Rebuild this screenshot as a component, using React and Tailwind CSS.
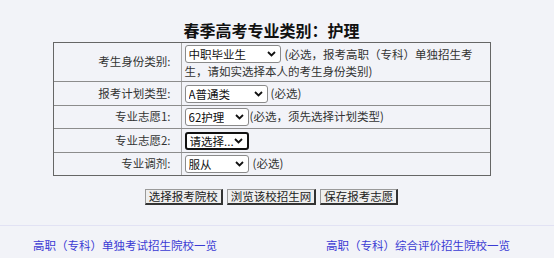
import React from "react";

function Chevron() {
  return (
    <svg width="9" height="6" viewBox="0 0 9 6" className="shrink-0">
      <path d="M1 1 L4.5 4.5 L8 1" fill="none" stroke="#111" strokeWidth="1.8" />
    </svg>
  );
}

function Sel({ w, text, focus }) {
  return (
    <span
      className={
        "inline-flex items-center justify-between h-[18px] bg-white rounded-[3px] pl-[3px] pr-[4px] align-middle text-[#111] whitespace-nowrap overflow-hidden " +
        (focus ? "border-2 border-[#111] pl-[2px] " : "border border-[#8a8a8a] ") +
        w
      }
    >
      <span className="leading-[14px] overflow-hidden">{text}</span>
      <Chevron />
    </span>
  );
}

function Row({ label, children, h, last }) {
  return (
    <div className={"flex " + (last ? "" : "border-b border-[#8c8c8c]")}>
      <div className={"w-[128px] shrink-0 flex items-center justify-end pr-[10px] border-r border-[#a8a8a8] " + h}>
        {label}
      </div>
      <div className="flex-1 pl-[3px] flex items-center whitespace-nowrap">{children}</div>
    </div>
  );
}

export default function App() {
  return (
    <div
      className="w-[554px] h-[258px] bg-[#f2f3f8] overflow-hidden text-[#333] text-[11.5px]"
      style={{ fontFamily: '"Noto Sans CJK SC", "Noto Sans", sans-serif' }}
    >
      <div className="w-[543px]">
        <div className="pt-[21px] h-[42px] text-center text-[16px] leading-[19px] font-bold text-[#111]">
          春季高考专业类别：护理
        </div>
        <div className="mx-auto w-[438px] border border-[#666]">
          <div className="flex border-b border-[#8c8c8c]">
            <div className="w-[128px] shrink-0 flex items-center justify-end pr-[10px] border-r border-[#a8a8a8] h-[38px]">
              考生身份类别:
            </div>
            <div className="flex-1 pl-[3px] pt-[2px] leading-[17px] whitespace-nowrap">
              <div className="flex items-center gap-[4px]">
                <Sel w="w-[96px]" text="中职毕业生" />
                <span>(必选，报考高职（专科）单独招生考</span>
              </div>
              <div>生，请如实选择本人的考生身份类别)</div>
            </div>
          </div>
          <Row label="报考计划类型:" h="h-[23px]">
            <Sel w="w-[83px]" text="A普通类" />
            <span className="ml-[3px]">(必选)</span>
          </Row>
          <Row label="专业志愿1:" h="h-[22px]">
            <Sel w="w-[64px]" text="62护理" />
            <span className="ml-[1px]">(必选，须先选择计划类型)</span>
          </Row>
          <Row label="专业志愿2:" h="h-[23px]">
            <Sel w="w-[64px]" text="请选择..." focus />
          </Row>
          <Row label="专业调剂:" h="h-[22px]" last>
            <Sel w="w-[64px]" text="服从" />
            <span className="ml-[4px]">(必选)</span>
          </Row>
        </div>
        <div className="flex justify-center gap-[4px] mt-[13px]">
          {["选择报考院校", "浏览该校招生网", "保存报考志愿"].map((t) => (
            <button
              key={t}
              className="h-[16px] px-[3px] leading-[13px] text-[11.5px] text-[#222] bg-[#efefef] border border-t-[#9a9a9a] border-l-[#9a9a9a] border-b-[#333] border-r-[#333] border-b-2 border-r-2"
            >
              {t}
            </button>
          ))}
        </div>
      </div>
      <div className="mt-[20px] border-t border-[#e2e2f4] flex pt-[11px] text-[#3b3bd4] text-[11.5px] leading-[16px]">
        <span className="ml-[33px]">高职（专科）单独考试招生院校一览</span>
        <span className="ml-[109px]">高职（专科）综合评价招生院校一览</span>
      </div>
    </div>
  );
}
